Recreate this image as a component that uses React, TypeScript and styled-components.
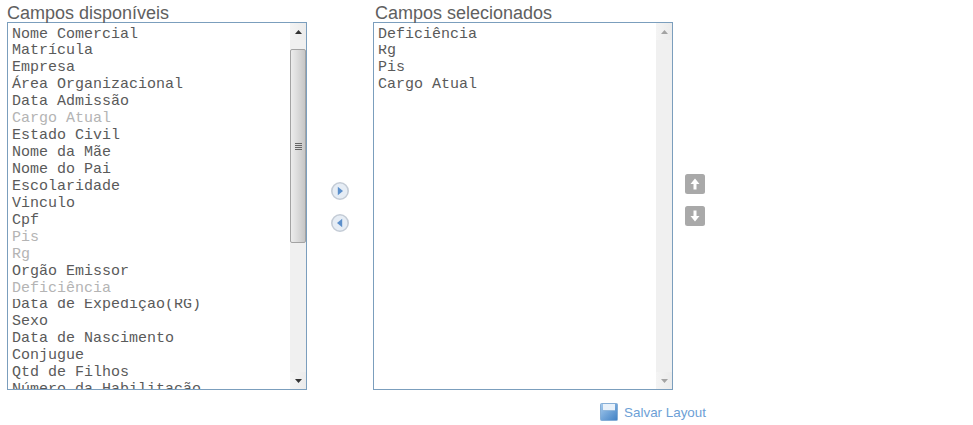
import styled, { createGlobalStyle } from 'styled-components'

const available: { label: string; used?: boolean; cut?: boolean; tight?: boolean }[] = [
    { label: 'Nome Comercial' },
    { label: 'Matrícula', tight: true },
    { label: 'Empresa' },
    { label: 'Área Organizacional' },
    { label: 'Data Admissão' },
    { label: 'Cargo Atual', used: true },
    { label: 'Estado Civil' },
    { label: 'Nome da Mãe' },
    { label: 'Nome do Pai' },
    { label: 'Escolaridade' },
    { label: 'Vinculo' },
    { label: 'Cpf' },
    { label: 'Pis', used: true },
    { label: 'Rg', used: true },
    { label: 'Orgão Emissor' },
    { label: 'Deficiência', used: true },
    { label: 'Data de Expedição(RG)', cut: true, tight: true },
    { label: 'Sexo' },
    { label: 'Data de Nascimento' },
    { label: 'Conjugue' },
    { label: 'Qtd de Filhos' },
    { label: 'Número da Habilitação' },
]

const selected: { label: string; cut?: boolean; tight?: boolean }[] = [
    { label: 'Deficiência' },
    { label: 'Rg', cut: true, tight: true },
    { label: 'Pis' },
    { label: 'Cargo Atual' },
]

export default function App() {
    return (
        <>
            <GlobalStyle />
            <Page>
                <Columns>
                    <Column>
                        <Title>Campos disponíveis</Title>
                        <ListBox>
                            <Items>
                                {available.map((item) => (
                                    <Item key={item.label} $used={item.used} $cut={item.cut} $tight={item.tight}>
                                        {item.label}
                                    </Item>
                                ))}
                            </Items>
                            <Scrollbar>
                                <ArrowCell>
                                    <Arrow viewBox="0 0 7 4"><path d="M3.5 0 7 4H0z" /></Arrow>
                                </ArrowCell>
                                <Thumb>
                                    <Grip />
                                    <Grip />
                                    <Grip />
                                    <Grip />
                                </Thumb>
                                <Track />
                                <ArrowCell>
                                    <Arrow viewBox="0 0 7 4"><path d="M0 0h7L3.5 4z" /></Arrow>
                                </ArrowCell>
                            </Scrollbar>
                        </ListBox>
                    </Column>
                    <MoveButtons>
                        <RoundButton viewBox="0 0 18 18">
                            <circle cx="9" cy="9" r="8.2" fill="#e6edf5" stroke="#c4ccd6" strokeWidth="1.6" />
                            <path d="M6.8 4.8 12 9l-5.2 4.2z" fill="#5b8fcb" />
                        </RoundButton>
                        <RoundButton viewBox="0 0 18 18">
                            <circle cx="9" cy="9" r="8.2" fill="#e6edf5" stroke="#c4ccd6" strokeWidth="1.6" />
                            <path d="M11.2 4.8 6 9l5.2 4.2z" fill="#5b8fcb" />
                        </RoundButton>
                    </MoveButtons>
                    <Column>
                        <Title $inset>Campos selecionados</Title>
                        <ListBox>
                            <Items>
                                {selected.map((item) => (
                                    <Item key={item.label} $cut={item.cut} $tight={item.tight}>
                                        {item.label}
                                    </Item>
                                ))}
                            </Items>
                            <Scrollbar>
                                <ArrowCell $off>
                                    <Arrow viewBox="0 0 7 4"><path d="M3.5 0 7 4H0z" /></Arrow>
                                </ArrowCell>
                                <Track />
                                <ArrowCell $off>
                                    <Arrow viewBox="0 0 7 4"><path d="M0 0h7L3.5 4z" /></Arrow>
                                </ArrowCell>
                            </Scrollbar>
                        </ListBox>
                    </Column>
                    <OrderButtons>
                        <SquareButton viewBox="0 0 20 20">
                            <rect width="20" height="20" rx="2.5" fill="#a9a9a9" />
                            <path d="M10 4.5 14.5 10H11.5v5.5h-3V10H5.5z" fill="#fff" />
                        </SquareButton>
                        <SquareButton viewBox="0 0 20 20">
                            <rect width="20" height="20" rx="2.5" fill="#a9a9a9" />
                            <path d="M10 15.5 14.5 10H11.5V4.5h-3V10H5.5z" fill="#fff" />
                        </SquareButton>
                    </OrderButtons>
                </Columns>
                <Footer>
                    <SaveLink href="#">
                        <svg width="18" height="18" viewBox="0 0 18 18">
                            <defs>
                                <linearGradient id="disk" x1="0" y1="0" x2="1" y2="1">
                                    <stop offset="0" stopColor="#a6cbee" />
                                    <stop offset="1" stopColor="#3f80c4" />
                                </linearGradient>
                            </defs>
                            <rect x="0.5" y="0.5" width="17" height="17" rx="1" fill="url(#disk)" stroke="#86aed6" />
                            <rect x="3" y="1" width="12" height="7" fill="#e8f1fa" />
                            <rect x="3" y="7" width="12" height="1" fill="#8fb6dc" />
                        </svg>
                        Salvar Layout
                    </SaveLink>
                </Footer>
            </Page>
        </>
    )
}

const GlobalStyle = createGlobalStyle`
    html, body {
        margin: 0;
        padding: 0;
        background: #fff;
    }
`

const Page = styled.div`
    width: 973px;
    height: 425px;
    padding-left: 7px;
    box-sizing: border-box;
    overflow: hidden;
`

const Columns = styled.div`
    display: flex;
    align-items: flex-start;
`

const Column = styled.div`
    width: 300px;
`

const Title = styled.div<{ $inset?: boolean }>`
    height: 22px;
    margin-left: ${({ $inset }) => ($inset ? '2px' : '0')};
    font-family: 'Liberation Sans', Arial, sans-serif;
    font-size: 18px;
    line-height: 27px;
    color: #606060;
    white-space: nowrap;
`

const ListBox = styled.div`
    display: flex;
    height: 368px;
    box-sizing: border-box;
    border: 1px solid #7b9ebd;
    background: #fff;
`

const Items = styled.div`
    flex: 1;
    min-width: 0;
    padding: 3px 0 0 4px;
    overflow: hidden;
`

const Item = styled.div<{ $used?: boolean; $cut?: boolean; $tight?: boolean }>`
    height: 17px;
    margin-top: ${({ $tight }) => ($tight ? '-1px' : '0')};
    font-family: 'Liberation Mono', 'Courier New', monospace;
    font-size: 15px;
    line-height: 18px;
    white-space: nowrap;
    color: ${({ $used }) => ($used ? '#b4b4b4' : '#5a5a5a')};
    clip-path: ${({ $cut }) => ($cut ? 'inset(3px 0 0 0)' : 'none')};
`

const Scrollbar = styled.div`
    width: 16px;
    display: flex;
    flex-direction: column;
    background: #f0f0f0;
`

const ArrowCell = styled.div<{ $off?: boolean }>`
    height: 17px;
    flex: none;
    display: flex;
    align-items: center;
    justify-content: center;
    fill: ${({ $off }) => ($off ? '#a3a3a3' : '#333')};
    background: linear-gradient(to right, #f4f4f4, #ebebeb);
`

const Arrow = styled.svg`
    width: 7px;
    height: 4px;
    display: block;
`

const Thumb = styled.div`
    height: 194px;
    margin-top: 9px;
    flex: none;
    box-sizing: border-box;
    display: flex;
    flex-direction: column;
    align-items: center;
    justify-content: center;
    gap: 1px;
    border: 1px solid #a3a3a3;
    border-radius: 2px;
    background: linear-gradient(to right, #ececec, #dedede 40%, #c6c6c6);
`

const Grip = styled.div`
    width: 7px;
    height: 1px;
    background: #666;
`

const Track = styled.div`
    flex: 1;
`

const MoveButtons = styled.div`
    width: 66px;
    flex: none;
    padding-top: 182px;
    box-sizing: border-box;
    display: flex;
    flex-direction: column;
    align-items: center;
    gap: 14px;
`

const RoundButton = styled.svg`
    width: 18px;
    height: 18px;
    display: block;
    margin-right: 1px;
`

const OrderButtons = styled.div`
    margin-left: 12px;
    padding-top: 174px;
    display: flex;
    flex-direction: column;
    gap: 12px;
`

const SquareButton = styled.svg`
    width: 20px;
    height: 20px;
    display: block;
`

const Footer = styled.div`
    width: 699px;
    margin-top: 13px;
    display: flex;
    justify-content: flex-end;
`

const SaveLink = styled.a`
    display: flex;
    align-items: center;
    gap: 6px;
    font-family: 'Liberation Sans', Arial, sans-serif;
    font-size: 13.4px;
    color: #6d9fd6;
    text-decoration: none;
`
